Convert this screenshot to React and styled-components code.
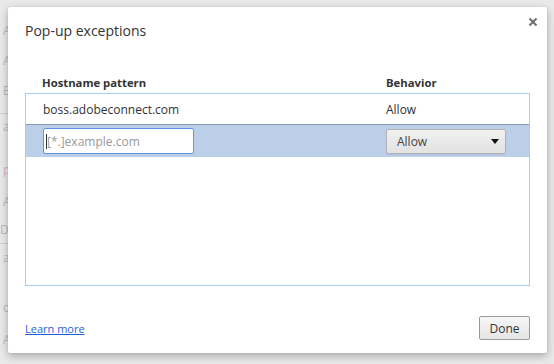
import styled, { createGlobalStyle } from "styled-components";

const GlobalStyle = createGlobalStyle`
  html, body {
    margin: 0;
    padding: 0;
    background: #e9e9e9;
    font-family: "Open Sans", "Noto Sans", "Liberation Sans", sans-serif;
    color: #333;
  }
`;

const Page = styled.div`
  position: relative;
  width: 554px;
  height: 364px;
  overflow: hidden;
  background: #e9e9e9;
`;

// faded settings page behind the dialog
const Backdrop = styled.div`
  display: flex;
  flex-direction: column;
  padding-left: 3px;
  width: 5px;
`;

const BackRow = styled.div`
  height: ${(p) => p.h}px;
  display: flex;
  align-items: center;
  font-size: 12px;
  color: ${(p) => p.color || "#b9b9b9"};
  border-bottom: ${(p) => (p.line ? "1px solid #d0d0d0" : "none")};
  margin-left: ${(p) => (p.line ? "-3px" : "0")};
  white-space: nowrap;
`;

const Dialog = styled.div`
  position: absolute;
  left: 8px;
  top: 7px;
  width: 539px;
  height: 346px;
  box-sizing: border-box;
  background: #fff;
  border-radius: 2px;
  box-shadow: 0 3px 8px rgba(0, 0, 0, 0.28), 0 0 1px rgba(0, 0, 0, 0.2);
  display: flex;
  flex-direction: column;
  padding: 14px 17px 13px 17px;
`;

const Title = styled.div`
  font-size: 14px;
  line-height: 20px;
  color: #333;
`;

const Close = styled.button`
  position: absolute;
  top: 9px;
  right: 8px;
  width: 12px;
  height: 12px;
  padding: 0;
  border: none;
  background: none;
  display: flex;
  align-items: center;
  justify-content: center;
`;

const Header = styled.div`
  margin-top: 32px;
  height: 18px;
  display: grid;
  grid-template-columns: 344px 1fr;
  padding-left: 17px;
  font-size: 11.3px;
  font-weight: 700;
  color: #333;
  align-items: center;
`;

const List = styled.div`
  margin-top: 2px;
  height: 193px;
  box-sizing: border-box;
  border: 1px solid #a6cdf4;
  display: flex;
  flex-direction: column;
`;

const Row = styled.div`
  height: ${(p) => (p.selected ? 32 : 31)}px;
  box-sizing: border-box;
  display: grid;
  grid-template-columns: 343px 1fr;
  padding-left: 17px;
  align-items: center;
  font-size: 12px;
  color: #333;
  background: ${(p) => (p.selected ? "#bccfe9" : "#fff")};
  border-bottom: ${(p) => (p.divider ? "1px solid #8a9cb4" : "none")};
`;

const Field = styled.div`
  width: 151px;
  height: 26px;
  box-sizing: border-box;
  border: 1px solid #5f93e6;
  border-radius: 2px;
  background: #fff;
  display: flex;
  align-items: center;
  padding-left: 2px;
  font-size: 12px;
  color: #9a9a9a;
`;

const Caret = styled.span`
  width: 1px;
  height: 15px;
  background: #333;
`;

const Select = styled.div`
  width: 120px;
  height: 25px;
  box-sizing: border-box;
  border: 1px solid #b3b3b3;
  border-radius: 2px;
  background: linear-gradient(#f0f0f0, #e2e2e2);
  box-shadow: 0 1px 1px rgba(0, 0, 0, 0.08);
  display: flex;
  align-items: center;
  justify-content: space-between;
  padding: 0 6px 0 10px;
  font-size: 12px;
  color: #444;
`;

const Arrow = styled.span`
  width: 0;
  height: 0;
  border-left: 4.5px solid transparent;
  border-right: 4.5px solid transparent;
  border-top: 5px solid #111;
`;

const Footer = styled.div`
  margin-top: auto;
  display: flex;
  align-items: center;
  justify-content: space-between;
`;

const Link = styled.a`
  font-size: 11px;
  color: #1f5fd6;
  text-decoration: underline;
  cursor: pointer;
`;

const Button = styled.button`
  width: 51px;
  height: 24px;
  box-sizing: border-box;
  border: 1px solid #9a9a9a;
  border-radius: 2px;
  background: linear-gradient(#f7f7f7, #e5e5e5);
  font-family: inherit;
  font-size: 12px;
  color: #333;
  padding: 0;
`;

const backRows = [
  { h: 15 },
  { h: 30, t: "A" },
  { h: 30, t: "A" },
  { h: 30, t: "B" },
  { h: 8, line: true },
  { h: 24, t: "a" },
  { h: 16 },
  { h: 30, t: "p", color: "#d8b4c8" },
  { h: 2 },
  { h: 30, t: "A" },
  { h: 27, t: "D", line: true },
  { h: 26, t: "a" },
  { h: 22 },
  { h: 30, t: "o" },
  { h: 2 },
  { h: 30, t: "A" },
];

export default function App() {
  return (
    <Page>
      <GlobalStyle />
      <Backdrop>
        {backRows.map((r, i) => (
          <BackRow key={i} h={r.h} line={r.line} color={r.color}>
            {r.t}
          </BackRow>
        ))}
      </Backdrop>
      <Dialog>
        <Title>Pop-up exceptions</Title>
        <Close>
          <svg width="10" height="10" viewBox="0 0 10 10">
            <path d="M1.5 1.5L8.5 8.5M8.5 1.5L1.5 8.5" stroke="#6e6e6e" strokeWidth="2" />
          </svg>
        </Close>
        <Header>
          <span>Hostname pattern</span>
          <span>Behavior</span>
        </Header>
        <List>
          <Row divider>
            <span>boss.adobeconnect.com</span>
            <span>Allow</span>
          </Row>
          <Row selected>
            <Field>
              <Caret />
              [*.]example.com
            </Field>
            <Select>
              Allow
              <Arrow />
            </Select>
          </Row>
        </List>
        <Footer>
          <Link>Learn more</Link>
          <Button>Done</Button>
        </Footer>
      </Dialog>
    </Page>
  );
}
